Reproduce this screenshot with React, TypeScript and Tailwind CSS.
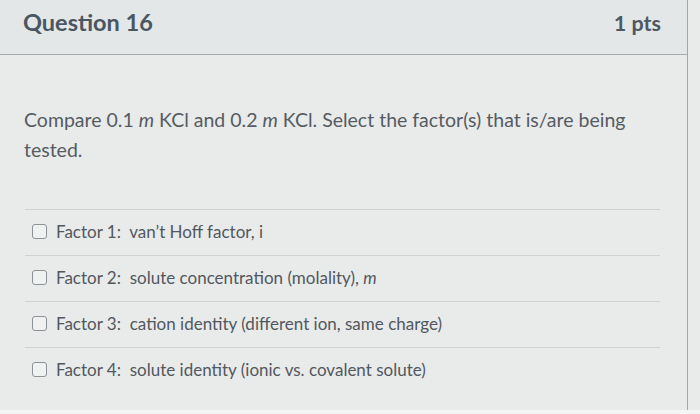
import React from 'react';

const answers = [
  { id: 1, label: 'Factor 1:', text: <>van’t Hoff factor, i</> },
  { id: 2, label: 'Factor 2:', text: <>solute concentration (molality), <i>m</i></> },
  { id: 3, label: 'Factor 3:', text: <>cation identity (different ion, same charge)</> },
  { id: 4, label: 'Factor 4:', text: <>solute identity (ionic vs. covalent solute)</> },
];

const App: React.FC = () => {
  return (
    <div className="w-[700px] h-[414px] bg-[#e8e9e9] flex flex-col overflow-hidden font-['Lato','Liberation_Sans',sans-serif]">
      <div className="flex flex-1">
        {/* Question card */}
        <div className="w-[688px] border-r border-[#a3a7aa] flex flex-col">
          <header className="h-[55px] bg-[#e3e7e8] border-b border-[#a7abae] flex items-center justify-between pl-[23px] pr-[26px] pb-[8px]">
            <h2 className="text-[23.5px] font-bold text-[#4a5661]">Question 16</h2>
            <span className="text-[21.5px] font-bold text-[#4d5862]">1 pts</span>
          </header>

          <div className="flex-1 bg-[#e9eaea] pt-[50px]">
            <p className="px-[24px] text-[19.5px] leading-[30px] text-[#555c62]">
              Compare 0.1 <i>m</i> KCl and 0.2 <i>m</i> KCl. Select the factor(s) that is/are being
              <br />
              tested.
            </p>

            <div className="mt-[44px] ml-[25px] mr-[27px]">
              {answers.map((a) => (
                <div key={a.id} className="h-[46px] border-t border-[#cfd1d2] flex items-center pl-[7px] pb-[2px]">
                  <span className="w-[15px] h-[15px] border border-[#8d9296] rounded-[3px] bg-[#f0f1f1] shrink-0" />
                  <span className="ml-[9px] text-[17px] text-[#51585e] whitespace-pre">
                    {a.label}{'  '}{a.text}
                  </span>
                </div>
              ))}
            </div>
          </div>
        </div>
        <div className="flex-1 bg-[#e9eaea]" />
      </div>
      <div className="h-[4px] bg-[#f4f5f5]" />
    </div>
  );
};

export default App;
